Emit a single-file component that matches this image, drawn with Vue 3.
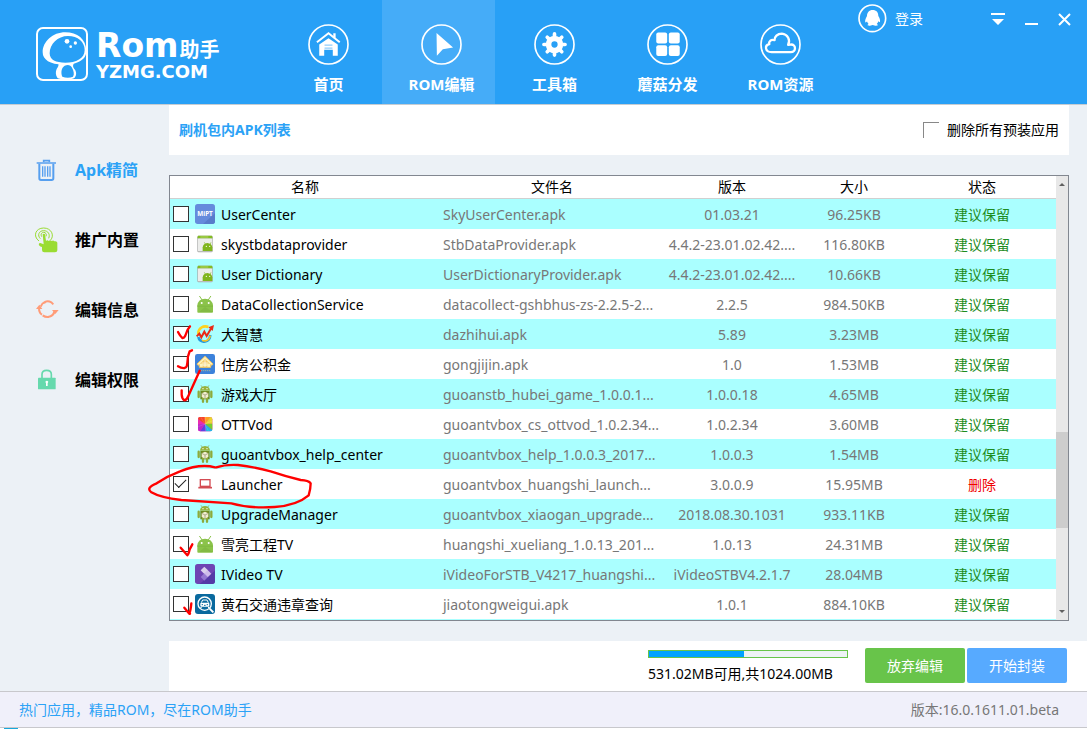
<script setup>
import { ref } from 'vue'

const tabs = [
  { id: 'home', label: '首页' },
  { id: 'edit', label: 'ROM编辑' },
  { id: 'tools', label: '工具箱' },
  { id: 'share', label: '蘑菇分发' },
  { id: 'cloud', label: 'ROM资源' }
]
const activeTab = ref('edit')

const sections = [
  { id: 'trash', label: 'Apk精简' },
  { id: 'touch', label: '推广内置' },
  { id: 'sync', label: '编辑信息' },
  { id: 'lock', label: '编辑权限' }
]
const activeSection = ref('trash')

const rows = ref([
  { icon: 'mipt', name: 'UserCenter', file: 'SkyUserCenter.apk', version: '01.03.21', size: '96.25KB', checked: false },
  { icon: 'provider', name: 'skystbdataprovider', file: 'StbDataProvider.apk', version: '4.4.2-23.01.02.42....', size: '116.80KB', checked: false },
  { icon: 'provider', name: 'User Dictionary', file: 'UserDictionaryProvider.apk', version: '4.4.2-23.01.02.42....', size: '10.66KB', checked: false },
  { icon: 'head', name: 'DataCollectionService', file: 'datacollect-gshbhus-zs-2.2.5-2...', version: '2.2.5', size: '984.50KB', checked: false },
  { icon: 'stock', name: '大智慧', file: 'dazhihui.apk', version: '5.89', size: '3.23MB', checked: false },
  { icon: 'house', name: '住房公积金', file: 'gongjijin.apk', version: '1.0', size: '1.53MB', checked: false },
  { icon: 'robot', name: '游戏大厅', file: 'guoanstb_hubei_game_1.0.0.1...', version: '1.0.0.18', size: '4.65MB', checked: false },
  { icon: 'ott', name: 'OTTVod', file: 'guoantvbox_cs_ottvod_1.0.2.34...', version: '1.0.2.34', size: '3.60MB', checked: false },
  { icon: 'robot', name: 'guoantvbox_help_center', file: 'guoantvbox_help_1.0.0.3_2017...', version: '1.0.0.3', size: '1.54MB', checked: false },
  { icon: 'laptop', name: 'Launcher', file: 'guoantvbox_huangshi_launch...', version: '3.0.0.9', size: '15.95MB', checked: true },
  { icon: 'robot', name: 'UpgradeManager', file: 'guoantvbox_xiaogan_upgrade...', version: '2018.08.30.1031', size: '933.11KB', checked: false },
  { icon: 'head', name: '雪亮工程TV', file: 'huangshi_xueliang_1.0.13_201...', version: '1.0.13', size: '24.31MB', checked: false },
  { icon: 'ivideo', name: 'IVideo TV', file: 'iVideoForSTB_V4217_huangshi...', version: 'iVideoSTBV4.2.1.7', size: '28.04MB', checked: false },
  { icon: 'traffic', name: '黄石交通违章查询', file: 'jiaotongweigui.apk', version: '1.0.1', size: '884.10KB', checked: false }
])
</script>

<template>
  <div class="app">
    <header class="top">
      <div class="brand">
        <svg class="mark" viewBox="0 0 156 162" fill="none" stroke="#fff" aria-hidden="true">
          <rect x="3" y="3" width="150" height="156" rx="18" stroke-width="6" />
          <path fill="#fff" stroke="none" fill-rule="evenodd" d="M88 16C50 16 20 44 20 76c0 22 22 37 62 37 40 0 70-14 69-42C150 36 124 16 88 16ZM96 27c30 0 50 18 50 42 0 26-26 38-58 38-28 0-47-8-47-28 0-28 24-52 55-52Z" />
          <path fill="#fff" stroke="none" fill-rule="evenodd" d="M66 108c4 6 0 12-4 18-4 8-3 20 2 26 6 6 44 8 52 0 7-8 5-20-1-26-6-7-4-12-1-18ZM86 116c10-4 18-2 22 6 5 9 8 19 3 27-9 4-22 4-32 0-5-12-3-27 7-33Z" />
          <g fill="#fff" stroke="none"><circle cx="93" cy="43" r="7" /><circle cx="118" cy="48" r="5" /><circle cx="104" cy="59" r="4" /></g>
        </svg>
        <div class="brand-text">
          <div class="brand-name"><span class="rom">Rom</span><span class="helper">助手</span></div>
          <div class="domain">YZMG.COM</div>
        </div>
      </div>

      <nav class="tabs">
        <button v-for="t in tabs" :key="t.id" type="button" class="tab" :class="{ active: activeTab === t.id }" @click="activeTab = t.id">
          <svg class="tab-icon" viewBox="0 0 124 124" fill="none" stroke="#fff" aria-hidden="true">
            <circle cx="62" cy="62" r="59" stroke-width="5" />
            <g v-if="t.id === 'home'">
              <path d="M27 55 62 28 96 55" stroke-width="6" />
              <path d="M80 28v14" stroke-width="7" />
              <path fill="#fff" stroke="none" d="M34 62 62 43l28 19v34H75V78H49v18H34Z" />
              <path d="M50 64h24M50 73h24" stroke="#8fcdfb" stroke-width="4" />
            </g>
            <path v-else-if="t.id === 'edit'" d="M47 27 97 71 66 76 48 96Z" fill="#fff" stroke="none" />
            <g v-else-if="t.id === 'tools'">
              <circle cx="62" cy="62" r="18" stroke-width="17" />
              <path stroke-width="11" stroke-linecap="round" d="M62 38v-8M62 86v8M38 62h-8M86 62h8M45 45l-5-5M79 45l5-5M45 79l-5 5M79 79l5 5" />
            </g>
            <g v-else-if="t.id === 'share'" fill="#fff" stroke="none">
              <rect x="28" y="26" width="33" height="33" rx="6" /><rect x="66" y="26" width="33" height="33" rx="6" />
              <rect x="28" y="64" width="33" height="33" rx="6" /><rect x="66" y="64" width="33" height="33" rx="6" />
            </g>
            <path v-else stroke-width="7" stroke-linejoin="round" d="M35 85h58c17 0 17-24 0-23-4 0-8 1-8 1 8-14-1-32-19-34-13 0-23 10-22 20-10-4-18 3-16 12-15 4-13 24 7 24Z" />
          </svg>
          <span>{{ t.label }}</span>
        </button>
      </nav>

      <div class="account">
        <button type="button" class="login">
          <svg viewBox="0 0 87 87" aria-hidden="true">
            <circle cx="43" cy="43" r="40" fill="none" stroke="#fff" stroke-width="5" />
            <path fill="#fff" d="M44 18c-11 0-17 8-17 18-4 7-7 15-5 19 2 1 4-1 5-3 1 4 3 6 5 8-6 3-3 5 4 5l8-2 8 2c8 0 10-2 4-5 2-2 4-4 5-8 2 2 4 3 5 2 1-6-1-12-5-18 0-11-6-18-17-18Z" />
          </svg>
          <span>登录</span>
        </button>
        <div class="window-controls">
          <button type="button" aria-label="菜单"><svg viewBox="0 0 14 14" fill="#fff"><path d="M0 1h14v2H0zM1 7h12l-6 6z" /></svg></button>
          <button type="button" aria-label="最小化"><svg viewBox="0 0 14 14" fill="#fff"><path d="M1 11h13v2H1z" /></svg></button>
          <button type="button" aria-label="关闭"><svg viewBox="0 0 14 14" fill="none" stroke="#fff" stroke-width="2"><path d="m2 2 11 11M13 2 2 13" /></svg></button>
        </div>
      </div>
    </header>

    <div class="body">
      <aside class="side">
        <button v-for="s in sections" :key="s.id" type="button" class="side-item" :class="{ active: activeSection === s.id }" @click="activeSection = s.id">
          <svg viewBox="0 0 72 78" aria-hidden="true">
            <g v-if="s.id === 'trash'" fill="none" stroke="#569fef" stroke-width="5">
              <path d="M5 18h58M26 15v-4h17v4" /><path d="M13 20v44q0 5 5 5h32q5 0 5-5V20" stroke-width="6" /><path d="M23 28v31M30 28v31M38 28v31M45 28v31" stroke-width="4" />
            </g>
            <g v-else-if="s.id === 'touch'" fill="none" stroke="#9adc32">
              <path d="M12 42C-7 28 1 3 26 3c23 0 33 22 21 36M16 35C6 25 12 11 26 11c14 0 20 12 15 23M20 29c-4-7 0-13 6-13s10 6 7 12" stroke-width="3" />
              <path fill="#9adc32" stroke="none" d="M23 22q4-4 7 0l3 20q4-5 8 0 5-5 9 0 5-4 8 1 8-2 9 4v23q0 6-7 6H28q-7 0-7-7V60q-5 0-9-5-2-7 4-7l10 4Z" />
            </g>
            <g v-else-if="s.id === 'sync'" fill="none" stroke="#ff9c78" stroke-width="6">
              <path d="M17 29c5-14 19-20 32-13l6 6M23 55c14 10 31 4 36-12M12 33c0 9 4 17 9 20M25 18l7-3M50 56l-10 4" />
              <path fill="#ff9c78" stroke="none" d="m3 36 10-13 9 13zM51 39h20L61 51z" />
            </g>
            <g v-else>
              <path d="M21 33V22q0-12 14-12t14 12v11" fill="none" stroke="#66d9ad" stroke-width="5" />
              <rect x="9" y="32" width="53" height="35" rx="2" fill="#66d9ad" />
              <path d="M31 44q5-6 9 0l-2 5v8h-5v-8z" fill="#fff" />
            </g>
          </svg>
          <span>{{ s.label }}</span>
        </button>
      </aside>

      <main class="main">
        <div class="titlebar">
          <h1>刷机包内APK列表</h1>
          <label class="filter"><input type="checkbox"><span>删除所有预装应用</span></label>
        </div>

        <div class="frame">
          <div class="list">
            <table>
              <colgroup><col class="c-name"><col><col class="c-version"><col class="c-size"><col class="c-status"></colgroup>
              <thead>
                <tr><th>名称</th><th>文件名</th><th>版本</th><th>大小</th><th>状态</th></tr>
              </thead>
              <tbody>
                <tr v-for="(r, i) in rows" :key="r.file">
                  <td class="app-cell">
                    <div class="name">
                      <input :id="'apk' + i" v-model="r.checked" type="checkbox">
                      <svg class="app-icon" viewBox="0 0 60 60" aria-hidden="true">
                        <g v-if="r.icon === 'mipt'">
                          <rect width="60" height="60" rx="8" fill="#658bdc" /><path d="M60 28v24q0 8-8 8H24z" fill="#587ccb" />
                          <text x="30" y="36" text-anchor="middle" class="mipt">MiPT</text>
                        </g>
                        <g v-else-if="r.icon === 'provider'">
                          <rect x="7" y="5" width="46" height="50" rx="4" fill="#a9aaa8" /><rect x="9" y="13" width="42" height="39" rx="2" fill="#ecedeb" /><path d="M9 5h42l2 8H7z" fill="#83bc22" /><path d="M16 9h24" stroke="#c6e286" stroke-width="2" />
                          <path d="M23 51V40q2-12 14-13 13 1 15 13v11z" fill="#80b51d" /><path d="m28 25 5 8M48 25l-4 8" stroke="#80b51d" stroke-width="2" /><circle cx="34" cy="37" r="2" fill="#fff" /><circle cx="44" cy="37" r="2" fill="#fff" />
                        </g>
                        <g v-else-if="r.icon === 'head'">
                          <path d="M7 54V34Q9 15 30 14q22 1 24 20v20q0 2-3 2H10q-3 0-3-2Z" fill="#8bc34a" /><path d="m14 7 8 12M47 7l-8 12" stroke="#8bc34a" stroke-width="3" stroke-linecap="round" /><path d="M7 35h47v3H7z" fill="#7fb742" /><path d="m30 39 24 15H12z" fill="#82ba44" /><circle cx="20" cy="27" r="3" fill="#fff" /><circle cx="41" cy="27" r="3" fill="#fff" />
                        </g>
                        <g v-else-if="r.icon === 'stock'" fill="none">
                          <path d="M10 30C9 12 26 3 40 9" stroke="#ffd21c" stroke-width="8" /><path d="M10 39c4 17 26 19 34 3l2-9" stroke="#2299df" stroke-width="8" /><path d="M21 49c13 6 23-3 25-14" stroke="#ffc51b" stroke-width="5" />
                          <path d="m5 37 8-8 6 11 9-17 7 13L49 12" stroke="#e92a16" stroke-width="6" /><path d="m40 10 17-7-4 18z" fill="#e92a16" />
                        </g>
                        <g v-else-if="r.icon === 'house'">
                          <rect width="60" height="60" rx="7" fill="#3c82db" /><path d="M6 30 30 7l24 23-3 4-4-2v8H13v-8l-4 2z" fill="#fff4bf" stroke="#f5c45b" stroke-width="3" /><path d="m14 29 16-14 16 14zM23 32h14v7H23z" fill="#f6ca65" /><path d="M30 17v22M20 27h20M23 35h14" stroke="#fff" stroke-width="2" /><path d="M12 50h36" stroke="#d1c578" stroke-width="2" stroke-dasharray="4 2" />
                        </g>
                        <g v-else-if="r.icon === 'robot'">
                          <path d="M15 20Q16 7 30 6q14 1 15 14z" fill="#97b33c" /><path d="m18 4 5 7M42 4l-5 7" stroke="#869b45" stroke-width="2" /><circle cx="24" cy="14" r="2" fill="#fff" /><circle cx="36" cy="14" r="2" fill="#fff" /><path d="M16 21h28v25H16z" fill="#6f8a20" /><path d="M11 23v16M49 23v16M24 44v9M36 44v9" stroke="#8dab3c" stroke-width="7" stroke-linecap="round" /><path d="m30 23 10 5v11l-10 5-10-5V28z" fill="#f1eed0" /><path d="m20 28 10 5 10-5M30 33v11" fill="none" stroke="#8e8c65" stroke-width="2" />
                        </g>
                        <g v-else-if="r.icon === 'ott'">
                          <rect x="9" y="9" width="43" height="43" rx="7" fill="#e92db1" /><path d="M30 30 9 15q0-6 6-6h14z" fill="#f64527" /><path d="M30 30 29 9h17z" fill="#ff9f21" /><path d="m30 30 16-21q6 0 6 6v14z" fill="#e8d62c" /><path d="m30 30 22-1v19z" fill="#77cf2f" /><path d="m30 30 22 18q-1 4-6 4H32z" fill="#22b6e7" /><path d="M30 30 32 52H15z" fill="#6140e1" /><path d="m30 30-15 22q-6 0-6-7V31z" fill="#bc28cc" /><path d="M18 10 40 50M10 38l41-17M31 9v42" stroke="#fff" stroke-width="1" opacity=".4" />
                        </g>
                        <g v-else-if="r.icon === 'laptop'" fill="none" stroke="#d34c53" stroke-width="4">
                          <rect x="16" y="17" width="29" height="20" /><path d="M10 41h41" stroke-width="5" />
                        </g>
                        <g v-else-if="r.icon === 'ivideo'">
                          <rect width="60" height="60" rx="8" fill="#6e45b4" /><path d="M60 20v32q0 8-8 8H14z" fill="#4938a1" opacity=".7" /><path d="m28 8 11 11-11 11-11-11z" fill="#fff" opacity=".75" /><path d="m38 18 11 11-11 11-11-11z" fill="#d8c9ef" opacity=".9" /><path d="m28 28 11 11-11 11-11-11z" fill="#a48ddd" opacity=".7" />
                        </g>
                        <g v-else fill="none" stroke="#fff">
                          <rect width="60" height="60" rx="9" fill="#09699e" stroke="none" /><circle cx="29" cy="29" r="20" stroke-width="4" /><path d="m44 44 11 11" stroke-width="6" /><path d="m19 26 4-8h13l4 8" stroke-width="3" /><rect x="16" y="26" width="27" height="12" rx="3" fill="#fff" stroke="none" /><path d="M18 39v4M41 39v4" stroke-width="4" /><path d="M20 32h4M35 32h4M27 34h5" stroke="#09699e" stroke-width="3" />
                        </g>
                      </svg>
                      <label :for="'apk' + i">{{ r.name }}</label>
                    </div>
                  </td>
                  <td class="file">{{ r.file }}</td>
                  <td>{{ r.version }}</td>
                  <td>{{ r.size }}</td>
                  <td class="status" :class="{ remove: r.checked }">{{ r.checked ? '删除' : '建议保留' }}</td>
                </tr>
              </tbody>
            </table>
          </div>
          <div class="scrollbar">
            <button type="button" class="up" aria-label="向上滚动"></button>
            <div class="track"><div class="thumb"></div></div>
            <button type="button" class="down" aria-label="向下滚动"></button>
          </div>
          <svg class="marks" viewBox="0 0 600 960" fill="none" stroke="#f00" stroke-width="7" stroke-linecap="round" stroke-linejoin="round" aria-hidden="true">
            <path d="M99 66q5 10 13 18 5 1 8-5l8-20 7-10" />
            <path d="M99 169q10 6 20 5 8-3 8-15 0-20 7-35l7-3" />
            <path d="M110 241v13q1 13 8 17 8-2 12-13l34-76" />
            <path d="M210 472q-45-12-105 12-38 14-70 36-34 14-16 27 27 16 90 23l150 10q55 16 130 11 67-5 102-35 6-20 6-36-6-9-30-10-45-11-90-26-52-14-98-19-38-2-65 7" />
            <path d="m107 713 20 23q4-3 7-18l8-15" />
            <path d="m118 893 15 18q4-10 6-31M128 905l7 6" />
          </svg>
        </div>

        <div class="actions">
          <div class="usage">
            <progress max="100" value="48" aria-label="已用空间"></progress>
            <span>531.02MB可用,共1024.00MB</span>
          </div>
          <div class="buttons">
            <button type="button" class="discard">放弃编辑</button>
            <button type="button" class="build">开始封装</button>
          </div>
        </div>
      </main>
    </div>

    <footer class="foot">
      <a href="#">热门应用，精品ROM，尽在ROM助手</a>
      <span>版本:16.0.1611.01.beta</span>
    </footer>
    <div class="edge"></div>
  </div>
</template>

<style>
body { margin: 0; }
</style>

<style scoped>
.app { display: flex; flex-direction: column; min-height: 100vh; background: #ecf1f6; color: #000; font: 14px/20px "Noto Sans", "Noto Sans CJK SC", sans-serif; }
button { margin: 0; padding: 0; border: 0; background: none; color: inherit; font: inherit; cursor: pointer; }
input { margin: 0; }
svg { display: block; flex: none; }

.top { display: flex; height: 104px; background: #28a0f6; border-bottom: 1px solid #c5ccd2; color: #fff; }
.brand { display: flex; gap: 8px; width: 233px; padding: 27px 0 0 36px; }
.mark { width: 52px; height: 54px; }
.brand-text { padding-top: 2px; }
.brand-name { display: flex; align-items: baseline; gap: 1px; height: 34px; }
.rom { font: bold 33px/34px "DejaVu Sans", sans-serif; }
.helper { font: bold 20px/20px "Noto Sans CJK SC", sans-serif; }
.domain { font: bold 18px/18px "DejaVu Sans", sans-serif; }

.tabs { display: flex; }
.tab { display: flex; flex-direction: column; align-items: center; gap: 8px; width: 113px; padding: 24px 0 0 6px; font-weight: bold; font-size: 15px; line-height: 22px; }
.tab.active { background: #45acf8; }
.tab-icon { width: 41px; height: 41px; }

.account { display: flex; align-items: flex-start; justify-content: space-between; flex: 1; padding: 4px 16px 0 24px; }
.login { display: flex; align-items: center; gap: 8px; }
.login svg { width: 29px; height: 29px; }
.window-controls { display: flex; gap: 19px; padding-top: 8px; }
.window-controls svg { width: 14px; height: 14px; }

.body { display: flex; flex: 1; }
.side { display: flex; flex-direction: column; width: 169px; padding-top: 30px; }
.side-item { display: flex; align-items: center; gap: 16px; height: 70px; padding-left: 35px; font-size: 16px; font-weight: bold; }
.side-item svg { width: 24px; height: 26px; }
.side-item.active { color: #2ba2f6; }

.main { display: flex; flex-direction: column; flex: 1; gap: 20px; min-width: 0; }
.titlebar { display: flex; align-items: center; justify-content: space-between; height: 50px; margin-right: 18px; padding: 0 10px; background: #fff; }
h1 { margin: 0; color: #2ba2f6; font-size: 14px; font-weight: bold; }
.filter { display: flex; align-items: center; gap: 8px; }
.filter input { appearance: none; width: 16px; height: 16px; border: solid #888; border-width: 1px 0 0 1px; background: #fff; }

.frame { position: relative; display: flex; margin-right: 18px; border: 1px solid #828790; }
.list { flex: 1; min-width: 0; padding-bottom: 1px; background: #aff; }
table { width: 100%; table-layout: fixed; border-collapse: separate; border-spacing: 0; }
.c-name { width: 270px; }
.c-version { width: 136px; }
.c-size { width: 108px; }
.c-status { width: 148px; }
th { height: 22px; padding: 0; border-bottom: 1px solid #d0d0d0; background: #fff; font-weight: normal; }
td { height: 28px; padding: 2px 0 0; background: #fff; color: #777; text-align: center; white-space: nowrap; }
td.app-cell { height: 30px; padding: 0; }
tr:nth-child(odd) td { background: #aff; }
.name { display: flex; align-items: center; gap: 6px; padding-left: 3px; color: #000; }
.name label { padding-top: 2px; }
.name input { appearance: none; width: 16px; height: 16px; border: 1px solid #333; background: #fff; }
.name input:checked::before { content: ""; display: block; width: 10px; height: 5px; margin: 2px 0 0 1px; border: solid #222; border-width: 0 0 1px 1px; transform: rotate(-45deg); }
.app-icon { width: 20px; height: 20px; }
.mipt { fill: #fff; font: bold 19px "Noto Sans", sans-serif; }
td.file { padding-left: 3px; text-align: left; }
td.status { color: #1e8c1e; }
td.remove { color: #f00000; }

.scrollbar { display: flex; flex-direction: column; width: 12px; background: #e8e8e8; }
.scrollbar button { display: flex; align-items: center; justify-content: center; height: 17px; }
.scrollbar button::before { content: ""; border: solid transparent; border-width: 0 3px; }
.scrollbar .up::before { border-bottom: 3px solid #606060; }
.scrollbar .down::before { border-top: 3px solid #606060; }
.track { display: flex; flex-direction: column; flex: 1; padding-bottom: 75px; }
.thumb { height: 96px; margin-top: auto; background: #cdcdcd; }
.marks { position: absolute; left: -25px; top: 134px; width: 200px; height: 320px; pointer-events: none; }

.actions { display: flex; align-items: flex-start; justify-content: flex-end; gap: 17px; height: 43px; padding: 7px 20px 0 0; background: #fff; }
.usage { display: flex; flex-direction: column; gap: 6px; width: 200px; padding-top: 2px; white-space: nowrap; }
progress { appearance: none; display: block; box-sizing: border-box; width: 100%; height: 8px; border: 1px solid #68c44a; background: #eef2f6; }
progress::-webkit-progress-bar { background: #eef2f6; }
progress::-webkit-progress-value { background: #00a2ff; }
.buttons { display: flex; gap: 2px; }
.buttons button { width: 100px; height: 35px; border-radius: 2px; color: #fff; }
.discard { background: #68c44a; }
.build { background: #57aaff; }

.foot { display: flex; align-items: center; justify-content: space-between; height: 35px; padding: 0 28px 0 19px; border: solid #c8c8cc; border-width: 1px 0; background: #f0f0fa; color: #777; }
.foot a { color: #2ba2f6; text-decoration: none; }
.edge { height: 1px; background: linear-gradient(90deg, #fff 4px, #18a8dc 4px, #18a8dc 18px, #fff 18px); }
</style>
